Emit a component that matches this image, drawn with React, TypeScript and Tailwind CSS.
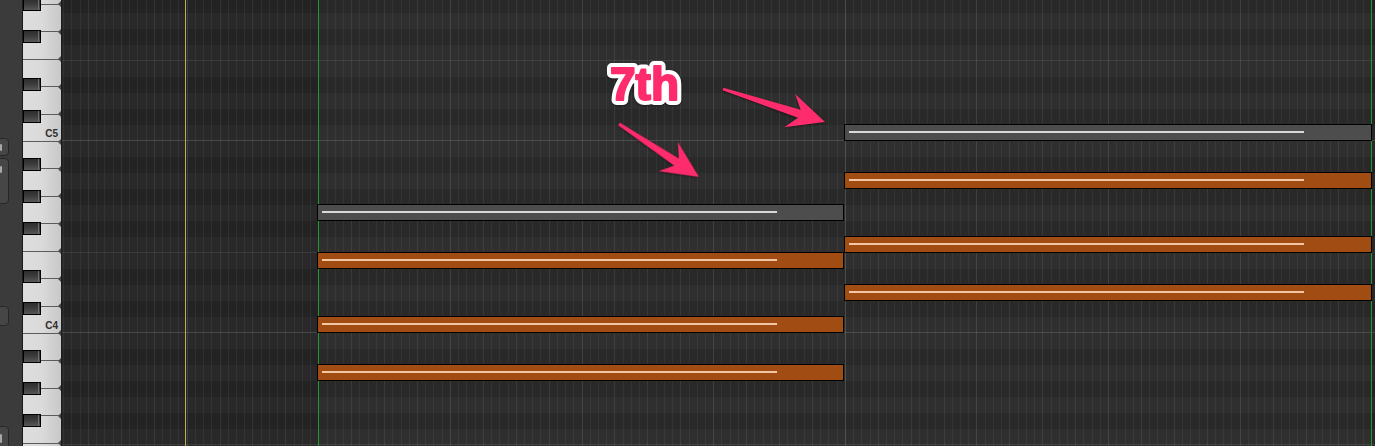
import React from 'react';
import clsx from 'clsx';

// lane geometry: one semitone = 16px, G#5 lane starts just above the view
const ROW = 16;
const TOP_PITCH = 80;
const TOP_Y = -3;
const BLACK_PC = [1, 3, 6, 8, 10];
const isBlack = (p: number) => BLACK_PC.includes(p % 12);
const laneY = (p: number) => TOP_Y + (TOP_PITCH - p) * ROW;

// horizontal geometry inside the grid (grid starts at x=62)
const GRID_W = 1313;
const REGION_X = 256.3;
const REGION_END = 1309;
const STEP = 8.227; // 1/64 note
const PINK = '#fe2c6c';

type Note = { pitch: number; x: number; w: number; muted?: boolean };

const notes: Note[] = [
  // Am7
  { pitch: 67, x: 255, w: 527, muted: true },
  { pitch: 64, x: 255, w: 527 },
  { pitch: 60, x: 255, w: 527 },
  { pitch: 57, x: 255, w: 527 },
  // Dm7
  { pitch: 72, x: 782, w: 528, muted: true },
  { pitch: 69, x: 782, w: 528 },
  { pitch: 65, x: 782, w: 528 },
  { pitch: 62, x: 782, w: 528 },
];

const lanes: number[] = [];
for (let p = TOP_PITCH; p >= 52; p--) lanes.push(p);

const whiteKeys: number[] = [];
for (let p = 81; p >= 52; p--) if (!isBlack(p)) whiteKeys.push(p);

const blackKeys = lanes.filter(isBlack);

// track header controls, mostly scrolled out of view on the left
function SideButton({ className, mark }: { className: string; mark?: string }) {
  return (
    <div
      className={clsx(
        'relative -ml-[13px] w-[22px] shrink-0 rounded-[4px] border border-[#262626] bg-[#464646]',
        className,
      )}
    >
      {mark && <span className={clsx('absolute right-[6px] w-[2px] rounded-[1px] bg-[#a8a8a8]', mark)} />}
    </div>
  );
}

function Piano() {
  return (
    <div className="relative w-[39px] shrink-0 overflow-hidden border-r border-[#1c1c1c]">
      <div className="-mt-[23.5px] flex flex-col">
        {whiteKeys.map((p) => (
          <div
            key={p}
            className="relative flex h-[27.43px] shrink-0 items-end justify-end border-t border-[#5c5c5c] bg-linear-to-r from-[#dedede] via-[#dadada] to-[#c8c8c8] pb-[2px] pr-[3px]"
          >
            <span className="absolute -top-[3.5px] right-0 border-y-[3px] border-r-[3px] border-y-transparent border-r-[#4a4a4a]" />
            {p % 12 === 0 && (
              <span className="text-[10px] font-bold leading-none text-[#2e2e2e]">C{p / 12 - 1}</span>
            )}
          </div>
        ))}
      </div>
      {blackKeys.map((p) => (
        <div
          key={p}
          className="absolute left-0 h-[13px] w-[18px] border border-black bg-linear-to-b from-[#2c2c2c] via-[#3e3e3e] to-[#575757]"
          style={{ top: laneY(p) + 1 }}
        >
          <div className="absolute bottom-0 right-[1px] top-0 w-px bg-[#6e6e6e]" />
        </div>
      ))}
    </div>
  );
}

function GridLines() {
  const lines: React.ReactNode[] = [];
  for (let k = -32; k <= 130; k++) {
    const x = REGION_X + k * STEP;
    if (x < 0 || x > GRID_W) continue;
    const a = k % 64 === 0 ? 0.16 : k % 16 === 0 ? 0.11 : k % 4 === 0 ? 0.08 : 0.05;
    const xx = Math.round(x) + 0.5;
    lines.push(<line key={k} x1={xx} x2={xx} y1={0} y2={446} stroke={`rgba(255,255,255,${a})`} />);
  }
  return (
    <svg className="absolute inset-0" width={GRID_W} height={446}>
      {lines}
      <line x1={123.5} x2={123.5} y1={0} y2={446} stroke="#c0ae48" />
      <line x1={256.5} x2={256.5} y1={0} y2={446} stroke="#1f9a2e" />
      <line x1={REGION_END + 0.5} x2={REGION_END + 0.5} y1={0} y2={446} stroke="#1f9a2e" />
    </svg>
  );
}

function Arrow({ x1, y1, x2, y2 }: { x1: number; y1: number; x2: number; y2: number }) {
  const len = Math.hypot(x2 - x1, y2 - y1);
  const ang = (Math.atan2(y2 - y1, x2 - x1) * 180) / Math.PI;
  const pts = [
    [0, -1.4],
    [len - 27, -4.2],
    [len - 37, -17.5],
    [len, 0],
    [len - 37, 17.5],
    [len - 27, 4.2],
    [0, 1.4],
  ];
  return (
    <polygon
      points={pts.map((q) => q.join(',')).join(' ')}
      transform={`translate(${x1} ${y1}) rotate(${ang})`}
      fill={PINK}
    />
  );
}

export default function App() {
  return (
    <div className="relative flex h-[446px] w-[1375px] overflow-hidden bg-[#2a2a2a] font-['Liberation_Sans',Arial,sans-serif]">
      {/* left strip */}
      <div className="flex w-[23px] shrink-0 flex-col overflow-hidden border-r border-[#1a1a1a] bg-[#3b3b3b]">
        <SideButton className="mt-[138px] h-[18px]" mark="top-[5px] h-[7px]" />
        <SideButton className="mt-[2px] h-[46px]" mark="top-[7px] h-[7px]" />
        <SideButton className="mt-[102px] h-[20px]" />
        <SideButton className="mt-[100px] h-[24px]" mark="top-[7px] h-[9px]" />
      </div>

      <Piano />

      {/* note lanes */}
      <div className="relative flex-1 overflow-hidden">
        <div className="-mt-[3px] flex flex-col">
          {lanes.map((p) => (
            <div
              key={p}
              className={clsx(
                'h-4 shrink-0',
                isBlack(p) ? 'bg-[#232323]' : 'bg-[#292929]',
                p % 12 === 0 && 'border-b border-[#474747]',
                p % 12 === 5 && 'border-b border-[#3a3a3a]',
              )}
            />
          ))}
        </div>
        <div className="absolute bottom-0 left-[256px] top-0 w-[1054px] bg-white/[0.03]" />
        <GridLines />

        {notes.map((n) => (
          <div
            key={`${n.x}-${n.pitch}`}
            className={clsx('absolute h-[17px] border border-black', n.muted ? 'bg-[#4d4d4d]' : 'bg-[#a04c13]')}
            style={{ left: n.x, top: laneY(n.pitch) - 1, width: n.w }}
          >
            <div className={clsx('ml-[4px] mt-[6px] h-[2px] w-[455px]', n.muted ? 'bg-[#d9d9d9]' : 'bg-[#f3c6a4]')} />
          </div>
        ))}
      </div>

      {/* annotation layer */}
      <svg className="pointer-events-none absolute inset-0" width={1375} height={446}>
        <g style={{ filter: 'drop-shadow(0 1px 1px rgba(0,0,0,0.45))' }}>
          <Arrow x1={619} y1={124} x2={699} y2={177} />
          <Arrow x1={723} y1={89} x2={825} y2={122} />
          <text
            x={610}
            y={100}
            fontSize={46}
            fontWeight={700}
            fontFamily="'Liberation Sans', Arial, sans-serif"
            fill={PINK}
            stroke="#ffffff"
            strokeWidth={10}
            strokeLinejoin="round"
            paintOrder="stroke"
          >
            7th
          </text>
          <text
            x={610}
            y={100}
            fontSize={46}
            fontWeight={700}
            fontFamily="'Liberation Sans', Arial, sans-serif"
            fill={PINK}
            stroke={PINK}
            strokeWidth={2}
            strokeLinejoin="round"
          >
            7th
          </text>
        </g>
      </svg>
    </div>
  );
}
